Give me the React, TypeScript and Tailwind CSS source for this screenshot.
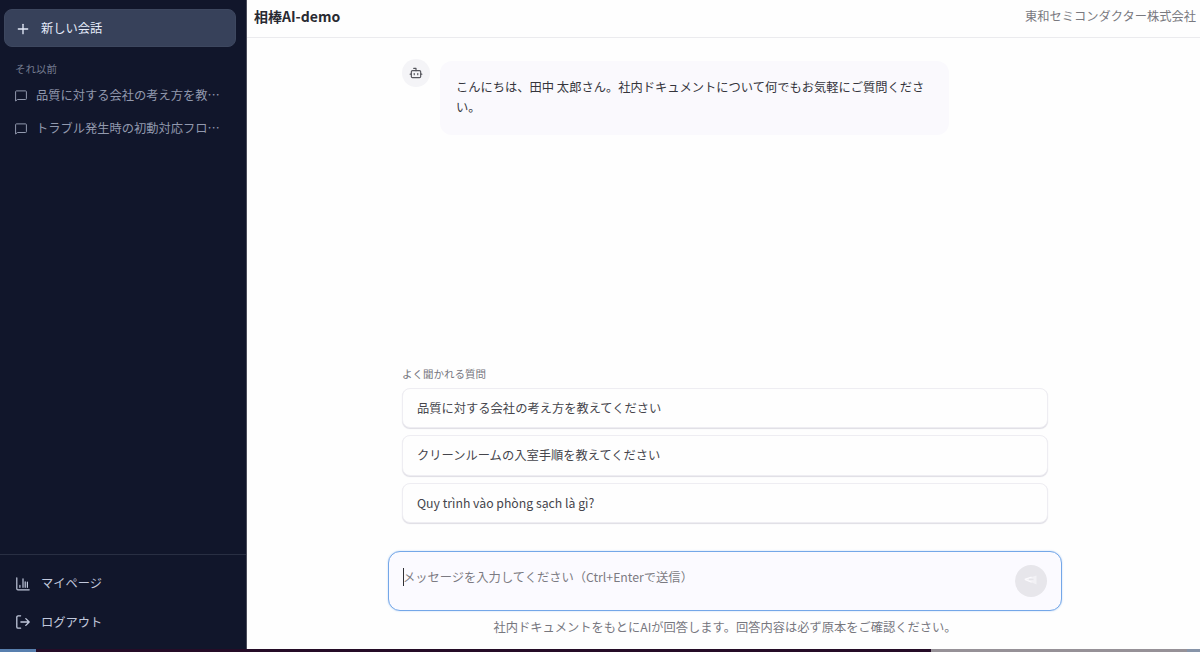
import { Bot, Plus } from "lucide-react";

const history = [
  "品質に対する会社の考え方を教…",
  "トラブル発生時の初動対応フロ…",
];

const questions = [
  "品質に対する会社の考え方を教えてください",
  "クリーンルームの入室手順を教えてください",
  "Quy trình vào phòng sạch là gì?",
];

const MessageIcon = () => (
  <svg
    className="w-3 h-3 shrink-0"
    viewBox="0 0 12 12"
    fill="none"
    stroke="currentColor"
    strokeLinejoin="round"
  >
    <path d="M.6 11V1.7a.8.8 0 0 1 .8-.8h9.2a.8.8 0 0 1 .8.8v7a.8.8 0 0 1-.8.8H2.5z" />
  </svg>
);

const ChartIcon = () => (
  <svg
    className="w-3.5 h-3.5 shrink-0"
    viewBox="0 0 14 14"
    fill="none"
    stroke="currentColor"
    strokeWidth="1.2"
    strokeLinecap="round"
  >
    <path d="M.8.8v10.9a1.1 1.1 0 0 0 1.1 1.1h11.3M3.9 10.3V8.4M7 10.3V1.8M9.2 10.3V4.8M11.4 10.3V5.2" />
  </svg>
);

const LogOutIcon = () => (
  <svg
    className="w-3.5 h-3.5 shrink-0"
    viewBox="0 0 14 14"
    fill="none"
    stroke="currentColor"
    strokeWidth="1.3"
    strokeLinecap="round"
    strokeLinejoin="round"
  >
    <path d="M4.6.8H2.1A1.3 1.3 0 0 0 .8 2.1v9.8a1.3 1.3 0 0 0 1.3 1.3h2.5M4.9 7h8.3M9.8 3.6 13.2 7l-3.4 3.4" />
  </svg>
);

const SendIcon = () => (
  <svg className="w-3.5 h-3.5 -mt-0.5" viewBox="0 0 14 14" fill="none">
    <path d="M.5 6.2 12.5 2.6v8.8z" fill="#f2f1f5" />
    <path d="M.8 6.2 7.6 4.1M.8 6.4l6.8 2.9" stroke="#fbfafd" strokeWidth="1.2" />
    <path d="M5 6.4h4.5" stroke="#e5e4e9" strokeWidth="1.4" />
  </svg>
);

const Sidebar = () => (
  <aside className="w-[247px] shrink-0 flex flex-col bg-[#11162b] border-r border-[#4b4d5b]">
    {/* New conversation */}
    <div className="pl-1 pr-2.5 pt-[9px]">
      <button className="w-full h-[38px] flex items-center gap-2.5 pl-2.5 pt-px rounded-lg bg-[#37415a] border border-[#3d475f] text-[#e6ecfa] text-[12.25px]">
        <Plus className="w-4 h-4" strokeWidth={2} />
        新しい会話
      </button>
    </div>

    {/* Past conversations */}
    <p className="pl-[15px] mt-3.5 text-[10.5px] leading-4 text-[#747b90]">それ以前</p>
    <ul className="mt-0.5">
      {history.map((title) => (
        <li
          key={title}
          className="h-[33px] pl-[15px] flex items-center gap-[9px] text-[#9299ae] text-[12.25px]"
        >
          <MessageIcon />
          <span className="whitespace-nowrap">{title}</span>
        </li>
      ))}
    </ul>

    {/* Account links */}
    <nav className="mt-auto h-[95px] pt-[9px] border-t border-[#292f43] text-[#c1c8dc] text-[12.25px]">
      <a className="h-[39px] pl-4 flex items-center gap-[11px]">
        <ChartIcon />
        マイページ
      </a>
      <a className="h-[38px] pl-4 flex items-center gap-[11px]">
        <LogOutIcon />
        ログアウト
      </a>
    </nav>
  </aside>
);

const Chat = () => (
  <main className="flex-1 flex flex-col bg-[#fefefe]">
    <header className="h-[38px] pl-[7px] pr-1 pb-1 flex items-center justify-between border-b border-[#ebebee]">
      <h1 className="pb-0.5 text-sm font-bold text-[#292a32]">相棒AI-demo</h1>
      <span className="text-[12.25px] text-[#79797f]">東和セミコンダクター株式会社</span>
    </header>

    <div className="w-[674px] ml-[141px] flex-1 flex flex-col">
      {/* Greeting */}
      <div className="flex items-start pl-3.5 pt-[21px] gap-2.5">
        <div className="w-7 h-7 rounded-full bg-[#f4f4f7] flex items-center justify-center text-[#55565d]">
          <Bot className="w-3.5 h-3.5" />
        </div>
        <div className="w-[509px] h-[74px] mt-0.5 px-4 pt-4 rounded-xl bg-[#faf9fd] text-[12.27px] leading-5 text-[#35353c]">
          こんにちは、田中 太郎さん。社内ドキュメントについて何でもお気軽にご質問ください。
        </div>
      </div>

      {/* Suggested questions */}
      <div className="mt-auto px-3.5">
        <p className="text-[10.5px] leading-4 text-[#75757d]">よく聞かれる質問</p>
        <div className="mt-1.5 flex flex-col gap-[7px]">
          {questions.map((question) => (
            <button
              key={question}
              className="h-[40.5px] px-3.5 rounded-lg border border-[#eeedf2] bg-[#fefefe] shadow-[0_1px_1px_#dedde4] text-left text-[12.27px] text-[#45454c]"
            >
              {question}
            </button>
          ))}
        </div>
      </div>

      {/* Composer */}
      <div className="mt-7 h-[60px] pl-3.5 pr-3.5 flex items-center justify-between rounded-xl border border-[#74a7e8] bg-[#fbfaff] shadow-[0_0_2px_#b9d3f5]">
        <div className="self-start mt-4 flex items-center">
          <span className="w-px h-[18px] bg-[#303036]" />
          <span className="-ml-px text-[12.27px] leading-[18px] text-[#7b7a82]">
            メッセージを入力してください（Ctrl+Enterで送信）
          </span>
        </div>
        <button className="w-8 h-8 rounded-full bg-[#e7e6eb] flex items-center justify-center">
          <SendIcon />
        </button>
      </div>
      <p className="mt-[7px] mb-[13px] h-[18px] text-center text-[12.25px] leading-[18px] text-[#77777e]">
        社内ドキュメントをもとにAIが回答します。回答内容は必ず原本をご確認ください。
      </p>
    </div>
  </main>
);

const App = () => {
  return (
    <div className="w-[1200px] h-[652px] flex flex-col overflow-hidden font-['Noto_Sans_CJK_JP',sans-serif]">
      <div className="flex-1 min-h-0 flex">
        <Sidebar />
        <Chat />
      </div>
      {/* Desktop edge under the window */}
      <div className="h-[3px] shrink-0 flex bg-[#250c27]">
        <div className="w-9 bg-[#587fae]" />
        <div className="flex-1" />
        <div className="w-[256px] bg-[#969197]" />
        <div className="w-[13px] bg-[#8794a8]" />
      </div>
    </div>
  );
};

export default App;
